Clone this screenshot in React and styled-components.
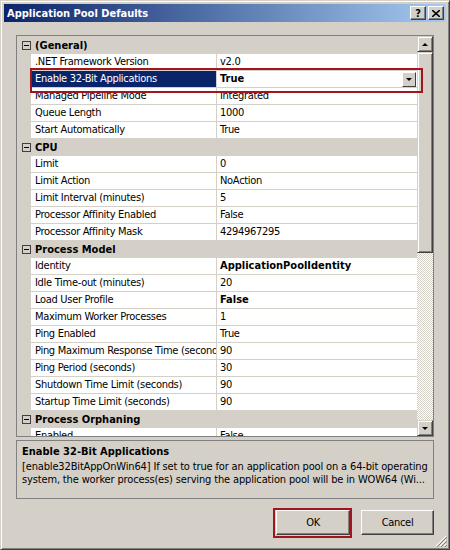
import React from "react";
import styled, { createGlobalStyle } from "styled-components";

const Global = createGlobalStyle`
  body { margin: 0; background: #d4d0c8; }
  * { box-sizing: border-box; }
`;

const FONT = `"DejaVu Sans Condensed", "DejaVu Sans", sans-serif`;

const Window = styled.div`
  position: relative;
  width: 450px;
  height: 550px;
  background: #d4d0c8;
  border-top: 1px solid #d4d0c8;
  border-left: 1px solid #d4d0c8;
  border-right: 1px solid #404040;
  border-bottom: 1px solid #404040;
  box-shadow: inset 1px 1px 0 #fff, inset -1px -1px 0 #808080;
  padding: 3px;
  font-family: ${FONT};
  font-size: 11px;
  letter-spacing: -0.3px;
  color: #000;
  display: flex;
  flex-direction: column;
`;

const TitleBar = styled.div`
  height: 18px;
  background: linear-gradient(to right, #0a246a, #a6caf0);
  display: flex;
  align-items: center;
  padding: 0 2px 0 3px;
`;

const Title = styled.div`
  flex: 1;
  color: #fff;
  font-weight: bold;
  font-size: 11px;
  letter-spacing: 0;
`;

const CapButton = styled.div`
  width: 16px;
  height: 14px;
  margin-left: ${(p) => (p.$gap ? "2px" : "0")};
  background: #d4d0c8;
  border-top: 1px solid #fff;
  border-left: 1px solid #fff;
  border-right: 1px solid #404040;
  border-bottom: 1px solid #404040;
  box-shadow: inset -1px -1px 0 #808080;
  display: flex;
  align-items: center;
  justify-content: center;
  font-weight: bold;
  font-size: 11px;
  line-height: 1;
`;

const Body = styled.div`
  flex: 1;
  padding: 13px 12px 0 12px;
  display: flex;
  flex-direction: column;
`;

const GridFrame = styled.div`
  height: 402px;
  border: 1px solid #808080;
  display: flex;
  background: #d4d0c8;
`;

const Rows = styled.div`
  flex: 1;
  overflow: hidden;
  padding-top: 1px;
`;

const Row = styled.div`
  height: 17px;
  display: grid;
  grid-template-columns: 14px 186px 1fr;
  background: ${(p) => (p.$cat ? "#d4d0c8" : "transparent")};
`;

const Margin = styled.div`
  background: #d4d0c8;
  display: flex;
  align-items: center;
  justify-content: center;
  padding-left: 4px;
`;

const Toggle = styled.div`
  width: 9px;
  height: 9px;
  border: 1px solid #404040;
  position: relative;
  &::after {
    content: "";
    position: absolute;
    left: 1px;
    right: 1px;
    top: 3px;
    height: 1px;
    background: #000;
  }
`;

const CatLabel = styled.div`
  grid-column: 2 / 4;
  font-weight: bold;
  font-size: 11px;
  letter-spacing: 0;
  padding-left: 4px;
  line-height: 17px;
`;

const Label = styled.div`
  background: ${(p) => (p.$sel ? "#0a246a" : "#fff")};
  color: ${(p) => (p.$sel ? "#fff" : "#000")};
  border-bottom: 1px solid #d4d0c8;
  border-right: 1px solid #d4d0c8;
  padding-left: 4px;
  line-height: 16px;
  white-space: nowrap;
  overflow: hidden;
`;

const Value = styled.div`
  background: #fff;
  border-bottom: 1px solid #d4d0c8;
  padding-left: 3px;
  line-height: 16px;
  font-weight: ${(p) => (p.$bold ? "bold" : "normal")};
  letter-spacing: ${(p) => (p.$bold ? "0" : "-0.3px")};
  white-space: nowrap;
  overflow: hidden;
  display: flex;
  align-items: center;
`;

const ValueText = styled.span`
  flex: 1;
`;

const DropButton = styled.div`
  width: 14px;
  height: 15px;
  margin-right: 1px;
  background: #d4d0c8;
  border-top: 1px solid #fff;
  border-left: 1px solid #fff;
  border-right: 1px solid #404040;
  border-bottom: 1px solid #404040;
  display: flex;
  align-items: center;
  justify-content: center;
`;

const Arrow = styled.div`
  width: 0;
  height: 0;
  border-left: 3px solid transparent;
  border-right: 3px solid transparent;
  ${(p) =>
    p.$up ? "border-bottom: 3px solid #000;" : "border-top: 3px solid #000;"}
`;

const ScrollBar = styled.div`
  width: 16px;
  display: flex;
  flex-direction: column;
  background: repeating-conic-gradient(#d4d0c8 0 25%, #fff 0 50%) 0 0 / 2px
    2px;
`;

const ScrollBtn = styled.div`
  height: 16px;
  background: #d4d0c8;
  border-top: 1px solid #d4d0c8;
  border-left: 1px solid #d4d0c8;
  border-right: 1px solid #404040;
  border-bottom: 1px solid #404040;
  box-shadow: inset 1px 1px 0 #fff, inset -1px -1px 0 #808080;
  display: flex;
  align-items: center;
  justify-content: center;
`;

const Thumb = styled.div`
  height: 201px;
  background: #d4d0c8;
  border-top: 1px solid #d4d0c8;
  border-left: 1px solid #d4d0c8;
  border-right: 1px solid #404040;
  border-bottom: 1px solid #404040;
  box-shadow: inset 1px 1px 0 #fff, inset -1px -1px 0 #808080;
`;

const Track = styled.div`
  flex: 1;
`;

const Description = styled.div`
  margin-top: 3px;
  height: 59px;
  border: 1px solid #808080;
  padding: 2px 5px 0 5px;
`;

const DescTitle = styled.div`
  font-weight: bold;
  font-size: 11px;
  letter-spacing: 0;
  line-height: 17px;
`;

const DescText = styled.div`
  line-height: 13px;
  letter-spacing: -0.15px;
  white-space: nowrap;
  overflow: hidden;
`;

const Footer = styled.div`
  display: flex;
  justify-content: flex-end;
  gap: 11px;
  padding-top: 11px;
`;

const Button = styled.div`
  width: ${(p) => p.$w}px;
  height: 25px;
  background: #d4d0c8;
  border-top: 1px solid #fff;
  border-left: 1px solid #fff;
  border-right: 1px solid #404040;
  border-bottom: 1px solid #404040;
  box-shadow: inset -1px -1px 0 #808080;
  display: flex;
  align-items: center;
  justify-content: center;
  font-size: 11px;
  position: relative;
`;

const Highlight = styled.div`
  position: absolute;
  border: 2px solid #a3151d;
  pointer-events: none;
`;

const Grip = styled.svg`
  position: absolute;
  right: 2px;
  bottom: 2px;
`;

const groups = [
  {
    name: "(General)",
    rows: [
      [".NET Framework Version", "v2.0"],
      ["Enable 32-Bit Applications", "True", true, true],
      ["Managed Pipeline Mode", "Integrated"],
      ["Queue Length", "1000"],
      ["Start Automatically", "True"],
    ],
  },
  {
    name: "CPU",
    rows: [
      ["Limit", "0"],
      ["Limit Action", "NoAction"],
      ["Limit Interval (minutes)", "5"],
      ["Processor Affinity Enabled", "False"],
      ["Processor Affinity Mask", "4294967295"],
    ],
  },
  {
    name: "Process Model",
    rows: [
      ["Identity", "ApplicationPoolIdentity", true],
      ["Idle Time-out (minutes)", "20"],
      ["Load User Profile", "False", true],
      ["Maximum Worker Processes", "1"],
      ["Ping Enabled", "True"],
      ["Ping Maximum Response Time (seconds)", "90"],
      ["Ping Period (seconds)", "30"],
      ["Shutdown Time Limit (seconds)", "90"],
      ["Startup Time Limit (seconds)", "90"],
    ],
  },
  {
    name: "Process Orphaning",
    rows: [
      ["Enabled", "False"],
      ["Executable", ""],
    ],
  },
];

const App = () => {
  return (
    <>
      <Global />
      <Window>
        <TitleBar>
          <Title>Application Pool Defaults</Title>
          <CapButton>?</CapButton>
          <CapButton $gap>
            <svg width="8" height="7" viewBox="0 0 8 7">
              <path d="M0 0 L8 7 M8 0 L0 7" stroke="#000" strokeWidth="1.6" />
            </svg>
          </CapButton>
        </TitleBar>
        <Body>
          <GridFrame>
            <Rows>
              {groups.map((g) => (
                <React.Fragment key={g.name}>
                  <Row $cat>
                    <Margin>
                      <Toggle />
                    </Margin>
                    <CatLabel>{g.name}</CatLabel>
                  </Row>
                  {g.rows.map(([label, value, bold, sel]) => (
                    <Row key={label}>
                      <Margin />
                      <Label $sel={sel}>{label}</Label>
                      <Value $bold={bold}>
                        <ValueText>{value}</ValueText>
                        {sel && (
                          <DropButton>
                            <Arrow />
                          </DropButton>
                        )}
                      </Value>
                    </Row>
                  ))}
                </React.Fragment>
              ))}
            </Rows>
            <ScrollBar>
              <ScrollBtn>
                <Arrow $up />
              </ScrollBtn>
              <Thumb />
              <Track />
              <ScrollBtn>
                <Arrow />
              </ScrollBtn>
            </ScrollBar>
          </GridFrame>
          <Description>
            <DescTitle>Enable 32-Bit Applications</DescTitle>
            <DescText>
              [enable32BitAppOnWin64] If set to true for an application pool on
              a 64-bit operating
            </DescText>
            <DescText>
              system, the worker process(es) serving the application pool will
              be in WOW64 (Wi...
            </DescText>
          </Description>
          <Footer>
            <Button $w={74}>OK</Button>
            <Button $w={73}>Cancel</Button>
          </Footer>
        </Body>
        <Highlight style={{ left: 29, top: 67, width: 393, height: 25 }} />
        <Highlight style={{ left: 272, top: 507, width: 79, height: 30 }} />
        <Grip width="12" height="12" viewBox="0 0 12 12">
          <path d="M11 1 L1 11 M11 5 L5 11 M11 9 L9 11" stroke="#fff" />
          <path d="M12 2 L2 12 M12 6 L6 12 M12 10 L10 12" stroke="#808080" />
        </Grip>
      </Window>
    </>
  );
};

export default App;
